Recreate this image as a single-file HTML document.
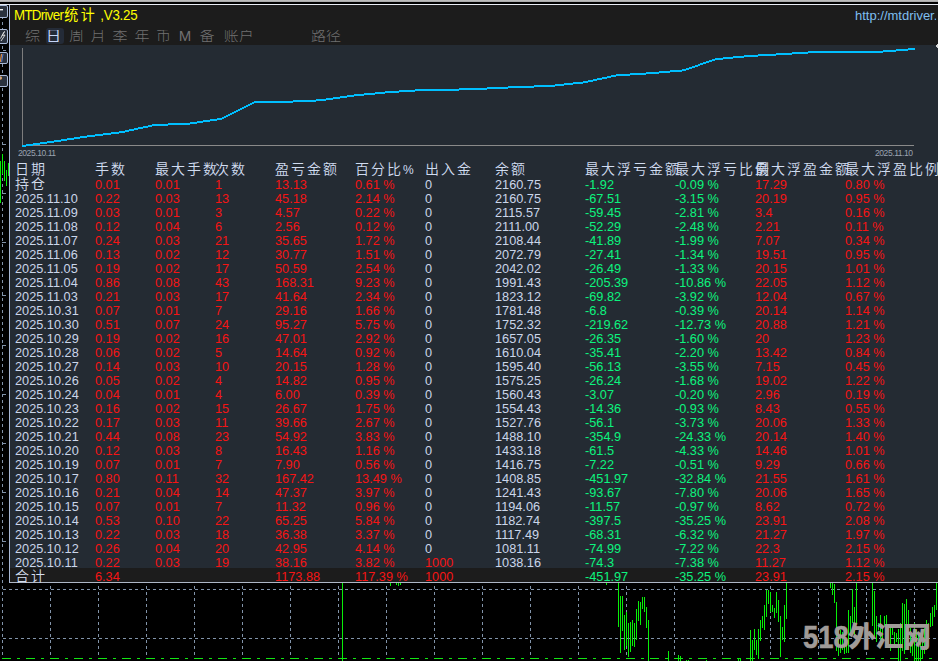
<!DOCTYPE html>
<html lang="zh-CN">
<head>
<meta charset="utf-8">
<title>MTDriver统计</title>
<style>
html,body{margin:0;padding:0;background:#000;}
body{width:938px;height:661px;position:relative;overflow:hidden;font-family:"Liberation Sans","Noto Sans CJK SC",sans-serif;}
#topbar{position:absolute;left:0;top:0;width:938px;height:2px;background:linear-gradient(#c4c4c4,#a2a2a2);}
#topline{position:absolute;left:0;top:4px;width:938px;height:1px;background:#e8ecf4;}
#bg{position:absolute;left:0;top:0;width:938px;height:661px;}
#panel{position:absolute;left:9px;top:5px;width:929px;height:578px;background:#242b33;border-left:1px solid #a9b9d6;box-sizing:border-box;overflow:hidden;}
#titlebg{position:absolute;left:0;top:0;width:929px;height:40px;background:#1c1c1c;}
#totbg{position:absolute;left:0;top:563px;width:929px;height:14px;background:#1c1c1c;}
#botline{position:absolute;left:0;top:577px;width:929px;height:1px;background:#aeb7c6;}
#abs{position:absolute;left:-10px;top:-5px;width:938px;height:661px;}
#title{position:absolute;left:14px;top:7px;font-size:13.33px;line-height:16px;color:#ffff00;white-space:nowrap;transform-origin:0 79%;transform:scaleY(1.07);}
#title span{display:inline-block;}
#title .t1{letter-spacing:-0.7px;}
#title .t2{font-size:14px;letter-spacing:2.5px;margin-left:1px;}
#title .t3{letter-spacing:-0.2px;white-space:pre;margin-left:-0.5px;}
#url{position:absolute;left:855px;top:8px;font-size:13.33px;line-height:16px;color:#7fbfef;white-space:nowrap;transform-origin:0 50%;transform:scaleX(0.975);width:83px;overflow:hidden;}
.tab{position:absolute;top:30px;width:40px;height:12px;overflow:hidden;text-align:center;font-size:15px;line-height:11px;color:#707070;font-weight:300;white-space:nowrap;}
.tab.on{color:#c6d6f6;font-weight:400;}
#tabon{position:absolute;left:46px;top:28px;width:18px;height:16px;border-radius:3px;background:#242b37;}
.dl{position:absolute;top:147px;font-size:9.5px;line-height:12px;color:#9aa3b1;white-space:nowrap;letter-spacing:-0.5px;transform-origin:0 50%;transform:scaleX(0.9);}
.h{position:absolute;top:160px;font-size:14px;letter-spacing:2px;line-height:18px;color:#d0dcf0;white-space:nowrap;font-weight:350;}
.row{position:absolute;left:0;width:938px;height:14px;font-size:13.33px;line-height:14px;white-space:nowrap;}
.row span{position:absolute;top:0;transform-origin:0 50%;transform:scaleX(0.955);}
.row .c{font-size:14px;letter-spacing:2px;font-weight:350;color:#d4deee;transform:none;top:-1.5px;}
.w{color:#cbd6ea;}
.h i{font-style:normal;font-size:12px;letter-spacing:0;}
.r{color:#f61414;}
.g{color:#0cf47e;}
#wm{position:absolute;left:0;top:0;color:#a09b98;white-space:nowrap;font-weight:bold;}
#wm .wd{position:absolute;left:803px;top:619px;font-size:30.5px;line-height:36px;transform-origin:0 50%;transform:scaleX(0.9);-webkit-text-stroke:0.5px #a09b98;}
#wm .wc{position:absolute;left:848px;top:619.5px;font-size:28px;line-height:36px;font-weight:900;letter-spacing:-0.5px;}
.btn{position:absolute;left:-2px;width:10px;height:13px;background:#2a313d;border:1px solid #a9b9d6;border-radius:2px;box-sizing:border-box;}
</style>
</head>
<body>
<svg id="bg" width="938" height="661" viewBox="0 0 938 661" shape-rendering="crispEdges">
<g stroke="#8193a9" stroke-width="1" stroke-dasharray="3 3" fill="none">
<g stroke-dashoffset="0"><line x1="2.5" y1="4" x2="2.5" y2="656"/><line x1="50.5" y1="4" x2="50.5" y2="656"/><line x1="98.5" y1="4" x2="98.5" y2="656"/><line x1="146.5" y1="4" x2="146.5" y2="656"/><line x1="194.5" y1="4" x2="194.5" y2="656"/><line x1="242.5" y1="4" x2="242.5" y2="656"/><line x1="290.5" y1="4" x2="290.5" y2="656"/><line x1="338.5" y1="4" x2="338.5" y2="656"/><line x1="386.5" y1="4" x2="386.5" y2="656"/><line x1="434.5" y1="4" x2="434.5" y2="656"/><line x1="482.5" y1="4" x2="482.5" y2="656"/><line x1="530.5" y1="4" x2="530.5" y2="656"/><line x1="578.5" y1="4" x2="578.5" y2="656"/><line x1="626.5" y1="4" x2="626.5" y2="656"/><line x1="674.5" y1="4" x2="674.5" y2="656"/><line x1="722.5" y1="4" x2="722.5" y2="656"/><line x1="770.5" y1="4" x2="770.5" y2="656"/><line x1="818.5" y1="4" x2="818.5" y2="656"/><line x1="866.5" y1="4" x2="866.5" y2="656"/><line x1="914.5" y1="4" x2="914.5" y2="656"/></g>
<line x1="3" y1="589.5" x2="938" y2="589.5"/><line x1="3" y1="638.5" x2="938" y2="638.5"/>
</g>
<g stroke="#12e612" stroke-width="1" stroke-dasharray="9 6 3 6" fill="none"><line x1="2" y1="658.5" x2="938" y2="658.5"/></g>
<g fill="#08ee08"><rect x="342" y="583" width="1" height="78"/><rect x="618" y="583" width="1" height="44"/><rect x="620" y="596" width="1" height="57"/><rect x="622" y="596" width="1" height="35"/><rect x="624" y="615" width="1" height="35"/><rect x="626" y="612" width="1" height="34"/><rect x="628" y="623" width="1" height="34"/><rect x="630" y="622" width="1" height="30"/><rect x="632" y="620" width="1" height="26"/><rect x="634" y="623" width="1" height="24"/><rect x="636" y="609" width="1" height="31"/><rect x="638" y="601" width="1" height="20"/><rect x="640" y="602" width="1" height="23"/><rect x="642" y="597" width="1" height="12"/><rect x="644" y="597" width="1" height="15"/><rect x="646" y="607" width="1" height="21"/><rect x="648" y="620" width="1" height="41"/><rect x="668" y="651" width="1" height="10"/><rect x="678" y="655" width="1" height="6"/><rect x="680" y="656" width="1" height="5"/><rect x="686" y="660" width="1" height="1"/><rect x="688" y="660" width="1" height="1"/><rect x="706" y="660" width="1" height="1"/><rect x="738" y="658" width="1" height="3"/><rect x="740" y="658" width="1" height="3"/><rect x="750" y="630" width="1" height="31"/><rect x="752" y="640" width="1" height="21"/><rect x="754" y="629" width="1" height="21"/><rect x="756" y="640" width="1" height="15"/><rect x="758" y="629" width="1" height="30"/><rect x="760" y="620" width="1" height="21"/><rect x="762" y="616" width="1" height="12"/><rect x="764" y="605" width="1" height="25"/><rect x="766" y="590" width="1" height="27"/><rect x="768" y="590" width="1" height="14"/><rect x="770" y="592" width="1" height="20"/><rect x="772" y="605" width="1" height="7"/><rect x="774" y="608" width="1" height="10"/><rect x="776" y="592" width="1" height="21"/><rect x="778" y="600" width="1" height="22"/><rect x="780" y="616" width="1" height="41"/><rect x="782" y="627" width="1" height="13"/><rect x="784" y="605" width="1" height="37"/><rect x="786" y="583" width="1" height="36"/><rect x="830" y="583" width="1" height="5"/><rect x="832" y="583" width="1" height="12"/><rect x="834" y="584" width="1" height="19"/><rect x="836" y="602" width="1" height="49"/><rect x="838" y="628" width="1" height="28"/><rect x="840" y="630" width="1" height="23"/><rect x="842" y="632" width="1" height="18"/><rect x="844" y="633" width="1" height="21"/><rect x="846" y="641" width="1" height="12"/><rect x="848" y="610" width="1" height="43"/><rect x="850" y="616" width="1" height="19"/><rect x="852" y="589" width="1" height="34"/><rect x="854" y="607" width="1" height="31"/><rect x="856" y="583" width="1" height="42"/><rect x="872" y="583" width="1" height="43"/><rect x="874" y="591" width="1" height="45"/><rect x="876" y="616" width="1" height="26"/><rect x="878" y="623" width="1" height="7"/><rect x="880" y="615" width="1" height="27"/><rect x="882" y="629" width="1" height="13"/><rect x="884" y="616" width="1" height="10"/><rect x="886" y="615" width="1" height="9"/><rect x="890" y="627" width="1" height="24"/><rect x="892" y="628" width="1" height="7"/><rect x="894" y="632" width="1" height="12"/><rect x="896" y="633" width="1" height="9"/><rect x="898" y="629" width="1" height="32"/><rect x="900" y="623" width="1" height="38"/><rect x="902" y="603" width="1" height="48"/><rect x="904" y="604" width="1" height="50"/><rect x="906" y="599" width="1" height="25"/><rect x="908" y="610" width="1" height="18"/><rect x="910" y="628" width="1" height="25"/><rect x="912" y="635" width="1" height="21"/><rect x="914" y="623" width="1" height="38"/><rect x="916" y="630" width="1" height="31"/><rect x="918" y="634" width="1" height="27"/><rect x="920" y="633" width="1" height="28"/><rect x="922" y="632" width="1" height="26"/><rect x="924" y="628" width="1" height="26"/><rect x="926" y="620" width="1" height="30"/><rect x="928" y="623" width="1" height="17"/><rect x="930" y="613" width="1" height="14"/><rect x="932" y="607" width="1" height="19"/><rect x="934" y="605" width="1" height="12"/><rect x="936" y="583" width="1" height="27"/><rect x="0" y="161" width="1" height="42"/><rect x="2" y="154" width="1" height="20"/><rect x="4" y="161" width="1" height="20"/><rect x="6" y="170" width="1" height="16"/><rect x="8" y="163" width="1" height="13"/><rect x="390" y="583" width="1" height="3"/><rect x="396" y="583" width="1" height="2"/><rect x="398" y="583" width="1" height="3"/><rect x="400" y="583" width="1" height="2"/><rect x="606" y="583" width="1" height="2"/></g>
<g fill="#8193a9"><rect x="3" y="50" width="3" height="1"/><rect x="2" y="144" width="4" height="1"/><rect x="2" y="193" width="4" height="1"/><rect x="2" y="242" width="4" height="1"/><rect x="2" y="295" width="4" height="1"/><rect x="2" y="345" width="4" height="1"/><rect x="2" y="394" width="4" height="1"/><rect x="2" y="443" width="4" height="1"/><rect x="2" y="492" width="4" height="1"/><rect x="2" y="541" width="4" height="1"/></g>
</svg>
<div id="topbar"></div>
<div id="topline"></div>
<div class="btn" style="top:5px"></div>
<div class="btn" style="top:29px;height:15px"></div>
<div class="btn" style="top:52px;height:12px"></div>
<div class="btn" style="top:75px;height:12px"></div>
<svg style="position:absolute;left:0;top:0" width="9" height="100" viewBox="0 0 9 100">
<rect x="0" y="9" width="3" height="1.4" fill="#f0f0f0"/>
<polyline points="0.5,38.5 4.5,31.5 2,35.5 5,35 1,41" fill="none" stroke="#d6d6d6" stroke-width="1"/>
<line x1="0.3" y1="62" x2="1.6" y2="54" stroke="#e08a3a" stroke-width="1.2"/><line x1="1.6" y1="62" x2="3" y2="54" stroke="#5a7fd0" stroke-width="1"/>
<circle cx="0.3" cy="78" r="1.8" fill="#e59a4a"/><circle cx="0.2" cy="78" r="0.8" fill="#8ab4f0"/>
</svg>
<div id="panel">
<div id="titlebg"></div>
<div id="totbg"></div>
<div id="botline"></div>
<div id="abs">
<div id="title"><span class="t1">MTDriver</span><span class="t2">统计</span><span class="t3"> ,V3.25</span></div>
<div id="url">http://mtdriver.</div>
<div id="tabon"></div>
<span class="tab" style="left:12.5px">综</span><span class="tab on" style="left:33.5px">日</span><span class="tab" style="left:56.5px">周</span><span class="tab" style="left:78px">月</span><span class="tab" style="left:100px">季</span><span class="tab" style="left:122px">年</span><span class="tab" style="left:143.5px">币</span><span class="tab" style="left:165px">M</span><span class="tab" style="left:187px">备</span><span class="tab" style="left:218.7px">账户</span><span class="tab" style="left:306px">路径</span>
<svg style="position:absolute;left:0;top:0" width="938" height="170" viewBox="0 0 938 170" shape-rendering="crispEdges">
<line x1="22.5" y1="48" x2="22.5" y2="146" stroke="#7d7d7d" stroke-width="1"/>
<line x1="22" y1="145.5" x2="914" y2="145.5" stroke="#8a8a8a" stroke-width="1"/>
<g fill="#00bfff"><rect x="22" y="145" width="4" height="2"/><rect x="26" y="144" width="7" height="2"/><rect x="33" y="143" width="7" height="2"/><rect x="40" y="142" width="7" height="2"/><rect x="47" y="141" width="7" height="2"/><rect x="54" y="140" width="7" height="2"/><rect x="61" y="139" width="6" height="2"/><rect x="67" y="138" width="7" height="2"/><rect x="74" y="137" width="6" height="2"/><rect x="80" y="136" width="7" height="2"/><rect x="87" y="135" width="8" height="2"/><rect x="95" y="134" width="8" height="2"/><rect x="103" y="133" width="8" height="2"/><rect x="111" y="132" width="8" height="2"/><rect x="119" y="131" width="6" height="2"/><rect x="125" y="130" width="4" height="2"/><rect x="129" y="129" width="5" height="2"/><rect x="134" y="128" width="4" height="2"/><rect x="138" y="127" width="5" height="2"/><rect x="143" y="126" width="5" height="2"/><rect x="148" y="125" width="4" height="2"/><rect x="152" y="124" width="16" height="2"/><rect x="168" y="123" width="22" height="2"/><rect x="190" y="122" width="7" height="2"/><rect x="197" y="121" width="6" height="2"/><rect x="203" y="120" width="7" height="2"/><rect x="210" y="119" width="7" height="2"/><rect x="217" y="118" width="5" height="2"/><rect x="222" y="117" width="2" height="2"/><rect x="224" y="116" width="2" height="2"/><rect x="226" y="115" width="2" height="2"/><rect x="228" y="114" width="2" height="2"/><rect x="230" y="113" width="2" height="2"/><rect x="232" y="112" width="2" height="2"/><rect x="234" y="111" width="2" height="2"/><rect x="236" y="110" width="2" height="2"/><rect x="238" y="109" width="2" height="2"/><rect x="240" y="108" width="2" height="2"/><rect x="242" y="107" width="2" height="2"/><rect x="244" y="106" width="2" height="2"/><rect x="246" y="105" width="2" height="2"/><rect x="248" y="104" width="2" height="2"/><rect x="250" y="103" width="2" height="2"/><rect x="252" y="102" width="2" height="2"/><rect x="254" y="101" width="39" height="2"/><rect x="293" y="100" width="23" height="2"/><rect x="316" y="99" width="10" height="2"/><rect x="326" y="98" width="7" height="2"/><rect x="333" y="97" width="7" height="2"/><rect x="340" y="96" width="7" height="2"/><rect x="347" y="95" width="7" height="2"/><rect x="354" y="94" width="10" height="2"/><rect x="364" y="93" width="11" height="2"/><rect x="375" y="92" width="10" height="2"/><rect x="385" y="91" width="14" height="2"/><rect x="399" y="90" width="16" height="2"/><rect x="415" y="89" width="44" height="2"/><rect x="459" y="88" width="28" height="2"/><rect x="487" y="87" width="21" height="2"/><rect x="508" y="86" width="26" height="2"/><rect x="534" y="85" width="21" height="2"/><rect x="555" y="84" width="9" height="2"/><rect x="564" y="83" width="9" height="2"/><rect x="573" y="82" width="10" height="2"/><rect x="583" y="81" width="5" height="2"/><rect x="588" y="80" width="5" height="2"/><rect x="593" y="79" width="4" height="2"/><rect x="597" y="78" width="5" height="2"/><rect x="602" y="77" width="5" height="2"/><rect x="607" y="76" width="4" height="2"/><rect x="611" y="75" width="5" height="2"/><rect x="616" y="74" width="14" height="2"/><rect x="630" y="73" width="16" height="2"/><rect x="646" y="72" width="13" height="2"/><rect x="659" y="71" width="11" height="2"/><rect x="670" y="70" width="12" height="2"/><rect x="682" y="69" width="4" height="2"/><rect x="686" y="68" width="3" height="2"/><rect x="689" y="67" width="3" height="2"/><rect x="692" y="66" width="3" height="2"/><rect x="695" y="65" width="3" height="2"/><rect x="698" y="64" width="2" height="2"/><rect x="700" y="63" width="3" height="2"/><rect x="703" y="62" width="3" height="2"/><rect x="706" y="61" width="3" height="2"/><rect x="709" y="60" width="3" height="2"/><rect x="712" y="59" width="3" height="2"/><rect x="715" y="58" width="8" height="2"/><rect x="723" y="57" width="10" height="2"/><rect x="733" y="56" width="11" height="2"/><rect x="744" y="55" width="14" height="2"/><rect x="758" y="54" width="18" height="2"/><rect x="776" y="53" width="16" height="2"/><rect x="792" y="52" width="16" height="2"/><rect x="808" y="51" width="75" height="2"/><rect x="883" y="50" width="13" height="2"/><rect x="896" y="49" width="12" height="2"/><rect x="908" y="48" width="7" height="2"/></g>
<polygon points="938,43 935.5,46 938,49" fill="#d8d8d8"/>
</svg>
<span class="dl" style="left:18px">2025.10.11</span>
<span class="dl" style="left:875px">2025.11.10</span>
<span class="h" style="left:15px">日期</span>
<span class="h" style="left:95px">手数</span>
<span class="h" style="left:155px">最大手数</span>
<span class="h" style="left:215px">次数</span>
<span class="h" style="left:275px">盈亏金额</span>
<span class="h" style="left:355px">百分比<i>%</i></span>
<span class="h" style="left:425px">出入金</span>
<span class="h" style="left:495px">余额</span>
<span class="h" style="left:585px">最大浮亏金额</span>
<span class="h" style="left:675px">最大浮亏比例</span>
<span class="h" style="left:755px">最大浮盈金额</span>
<span class="h" style="left:845px">最大浮盈比例</span>
<div class="row" style="top:178px"><span class="c" style="left:15px">持仓</span><span class="r" style="left:95px">0.01</span><span class="r" style="left:155px">0.01</span><span class="r" style="left:215px">1</span><span class="r" style="left:275px">13.13</span><span class="r" style="left:355px">0.61 %</span><span class="w" style="left:425px">0</span><span class="w" style="left:495px">2160.75</span><span class="g" style="left:585px">-1.92</span><span class="g" style="left:675px">-0.09 %</span><span class="r" style="left:755px">17.29</span><span class="r" style="left:845px">0.80 %</span></div>
<div class="row" style="top:192px"><span class="w" style="left:15px">2025.11.10</span><span class="r" style="left:95px">0.22</span><span class="r" style="left:155px">0.03</span><span class="r" style="left:215px">13</span><span class="r" style="left:275px">45.18</span><span class="r" style="left:355px">2.14 %</span><span class="w" style="left:425px">0</span><span class="w" style="left:495px">2160.75</span><span class="g" style="left:585px">-67.51</span><span class="g" style="left:675px">-3.15 %</span><span class="r" style="left:755px">20.19</span><span class="r" style="left:845px">0.95 %</span></div>
<div class="row" style="top:206px"><span class="w" style="left:15px">2025.11.09</span><span class="r" style="left:95px">0.03</span><span class="r" style="left:155px">0.01</span><span class="r" style="left:215px">3</span><span class="r" style="left:275px">4.57</span><span class="r" style="left:355px">0.22 %</span><span class="w" style="left:425px">0</span><span class="w" style="left:495px">2115.57</span><span class="g" style="left:585px">-59.45</span><span class="g" style="left:675px">-2.81 %</span><span class="r" style="left:755px">3.4</span><span class="r" style="left:845px">0.16 %</span></div>
<div class="row" style="top:220px"><span class="w" style="left:15px">2025.11.08</span><span class="r" style="left:95px">0.12</span><span class="r" style="left:155px">0.04</span><span class="r" style="left:215px">6</span><span class="r" style="left:275px">2.56</span><span class="r" style="left:355px">0.12 %</span><span class="w" style="left:425px">0</span><span class="w" style="left:495px">2111.00</span><span class="g" style="left:585px">-52.29</span><span class="g" style="left:675px">-2.48 %</span><span class="r" style="left:755px">2.21</span><span class="r" style="left:845px">0.11 %</span></div>
<div class="row" style="top:234px"><span class="w" style="left:15px">2025.11.07</span><span class="r" style="left:95px">0.24</span><span class="r" style="left:155px">0.03</span><span class="r" style="left:215px">21</span><span class="r" style="left:275px">35.65</span><span class="r" style="left:355px">1.72 %</span><span class="w" style="left:425px">0</span><span class="w" style="left:495px">2108.44</span><span class="g" style="left:585px">-41.89</span><span class="g" style="left:675px">-1.99 %</span><span class="r" style="left:755px">7.07</span><span class="r" style="left:845px">0.34 %</span></div>
<div class="row" style="top:248px"><span class="w" style="left:15px">2025.11.06</span><span class="r" style="left:95px">0.13</span><span class="r" style="left:155px">0.02</span><span class="r" style="left:215px">12</span><span class="r" style="left:275px">30.77</span><span class="r" style="left:355px">1.51 %</span><span class="w" style="left:425px">0</span><span class="w" style="left:495px">2072.79</span><span class="g" style="left:585px">-27.41</span><span class="g" style="left:675px">-1.34 %</span><span class="r" style="left:755px">19.51</span><span class="r" style="left:845px">0.95 %</span></div>
<div class="row" style="top:262px"><span class="w" style="left:15px">2025.11.05</span><span class="r" style="left:95px">0.19</span><span class="r" style="left:155px">0.02</span><span class="r" style="left:215px">17</span><span class="r" style="left:275px">50.59</span><span class="r" style="left:355px">2.54 %</span><span class="w" style="left:425px">0</span><span class="w" style="left:495px">2042.02</span><span class="g" style="left:585px">-26.49</span><span class="g" style="left:675px">-1.33 %</span><span class="r" style="left:755px">20.15</span><span class="r" style="left:845px">1.01 %</span></div>
<div class="row" style="top:276px"><span class="w" style="left:15px">2025.11.04</span><span class="r" style="left:95px">0.86</span><span class="r" style="left:155px">0.08</span><span class="r" style="left:215px">43</span><span class="r" style="left:275px">168.31</span><span class="r" style="left:355px">9.23 %</span><span class="w" style="left:425px">0</span><span class="w" style="left:495px">1991.43</span><span class="g" style="left:585px">-205.39</span><span class="g" style="left:675px">-10.86 %</span><span class="r" style="left:755px">22.05</span><span class="r" style="left:845px">1.12 %</span></div>
<div class="row" style="top:290px"><span class="w" style="left:15px">2025.11.03</span><span class="r" style="left:95px">0.21</span><span class="r" style="left:155px">0.03</span><span class="r" style="left:215px">17</span><span class="r" style="left:275px">41.64</span><span class="r" style="left:355px">2.34 %</span><span class="w" style="left:425px">0</span><span class="w" style="left:495px">1823.12</span><span class="g" style="left:585px">-69.82</span><span class="g" style="left:675px">-3.92 %</span><span class="r" style="left:755px">12.04</span><span class="r" style="left:845px">0.67 %</span></div>
<div class="row" style="top:304px"><span class="w" style="left:15px">2025.10.31</span><span class="r" style="left:95px">0.07</span><span class="r" style="left:155px">0.01</span><span class="r" style="left:215px">7</span><span class="r" style="left:275px">29.16</span><span class="r" style="left:355px">1.66 %</span><span class="w" style="left:425px">0</span><span class="w" style="left:495px">1781.48</span><span class="g" style="left:585px">-6.8</span><span class="g" style="left:675px">-0.39 %</span><span class="r" style="left:755px">20.14</span><span class="r" style="left:845px">1.14 %</span></div>
<div class="row" style="top:318px"><span class="w" style="left:15px">2025.10.30</span><span class="r" style="left:95px">0.51</span><span class="r" style="left:155px">0.07</span><span class="r" style="left:215px">24</span><span class="r" style="left:275px">95.27</span><span class="r" style="left:355px">5.75 %</span><span class="w" style="left:425px">0</span><span class="w" style="left:495px">1752.32</span><span class="g" style="left:585px">-219.62</span><span class="g" style="left:675px">-12.73 %</span><span class="r" style="left:755px">20.88</span><span class="r" style="left:845px">1.21 %</span></div>
<div class="row" style="top:332px"><span class="w" style="left:15px">2025.10.29</span><span class="r" style="left:95px">0.19</span><span class="r" style="left:155px">0.02</span><span class="r" style="left:215px">16</span><span class="r" style="left:275px">47.01</span><span class="r" style="left:355px">2.92 %</span><span class="w" style="left:425px">0</span><span class="w" style="left:495px">1657.05</span><span class="g" style="left:585px">-26.35</span><span class="g" style="left:675px">-1.60 %</span><span class="r" style="left:755px">20</span><span class="r" style="left:845px">1.23 %</span></div>
<div class="row" style="top:346px"><span class="w" style="left:15px">2025.10.28</span><span class="r" style="left:95px">0.06</span><span class="r" style="left:155px">0.02</span><span class="r" style="left:215px">5</span><span class="r" style="left:275px">14.64</span><span class="r" style="left:355px">0.92 %</span><span class="w" style="left:425px">0</span><span class="w" style="left:495px">1610.04</span><span class="g" style="left:585px">-35.41</span><span class="g" style="left:675px">-2.20 %</span><span class="r" style="left:755px">13.42</span><span class="r" style="left:845px">0.84 %</span></div>
<div class="row" style="top:360px"><span class="w" style="left:15px">2025.10.27</span><span class="r" style="left:95px">0.14</span><span class="r" style="left:155px">0.03</span><span class="r" style="left:215px">10</span><span class="r" style="left:275px">20.15</span><span class="r" style="left:355px">1.28 %</span><span class="w" style="left:425px">0</span><span class="w" style="left:495px">1595.40</span><span class="g" style="left:585px">-56.13</span><span class="g" style="left:675px">-3.55 %</span><span class="r" style="left:755px">7.15</span><span class="r" style="left:845px">0.45 %</span></div>
<div class="row" style="top:374px"><span class="w" style="left:15px">2025.10.26</span><span class="r" style="left:95px">0.05</span><span class="r" style="left:155px">0.02</span><span class="r" style="left:215px">4</span><span class="r" style="left:275px">14.82</span><span class="r" style="left:355px">0.95 %</span><span class="w" style="left:425px">0</span><span class="w" style="left:495px">1575.25</span><span class="g" style="left:585px">-26.24</span><span class="g" style="left:675px">-1.68 %</span><span class="r" style="left:755px">19.02</span><span class="r" style="left:845px">1.22 %</span></div>
<div class="row" style="top:388px"><span class="w" style="left:15px">2025.10.24</span><span class="r" style="left:95px">0.04</span><span class="r" style="left:155px">0.01</span><span class="r" style="left:215px">4</span><span class="r" style="left:275px">6.00</span><span class="r" style="left:355px">0.39 %</span><span class="w" style="left:425px">0</span><span class="w" style="left:495px">1560.43</span><span class="g" style="left:585px">-3.07</span><span class="g" style="left:675px">-0.20 %</span><span class="r" style="left:755px">2.96</span><span class="r" style="left:845px">0.19 %</span></div>
<div class="row" style="top:402px"><span class="w" style="left:15px">2025.10.23</span><span class="r" style="left:95px">0.16</span><span class="r" style="left:155px">0.02</span><span class="r" style="left:215px">15</span><span class="r" style="left:275px">26.67</span><span class="r" style="left:355px">1.75 %</span><span class="w" style="left:425px">0</span><span class="w" style="left:495px">1554.43</span><span class="g" style="left:585px">-14.36</span><span class="g" style="left:675px">-0.93 %</span><span class="r" style="left:755px">8.43</span><span class="r" style="left:845px">0.55 %</span></div>
<div class="row" style="top:416px"><span class="w" style="left:15px">2025.10.22</span><span class="r" style="left:95px">0.17</span><span class="r" style="left:155px">0.03</span><span class="r" style="left:215px">11</span><span class="r" style="left:275px">39.66</span><span class="r" style="left:355px">2.67 %</span><span class="w" style="left:425px">0</span><span class="w" style="left:495px">1527.76</span><span class="g" style="left:585px">-56.1</span><span class="g" style="left:675px">-3.73 %</span><span class="r" style="left:755px">20.06</span><span class="r" style="left:845px">1.33 %</span></div>
<div class="row" style="top:430px"><span class="w" style="left:15px">2025.10.21</span><span class="r" style="left:95px">0.44</span><span class="r" style="left:155px">0.08</span><span class="r" style="left:215px">23</span><span class="r" style="left:275px">54.92</span><span class="r" style="left:355px">3.83 %</span><span class="w" style="left:425px">0</span><span class="w" style="left:495px">1488.10</span><span class="g" style="left:585px">-354.9</span><span class="g" style="left:675px">-24.33 %</span><span class="r" style="left:755px">20.14</span><span class="r" style="left:845px">1.40 %</span></div>
<div class="row" style="top:444px"><span class="w" style="left:15px">2025.10.20</span><span class="r" style="left:95px">0.12</span><span class="r" style="left:155px">0.03</span><span class="r" style="left:215px">8</span><span class="r" style="left:275px">16.43</span><span class="r" style="left:355px">1.16 %</span><span class="w" style="left:425px">0</span><span class="w" style="left:495px">1433.18</span><span class="g" style="left:585px">-61.5</span><span class="g" style="left:675px">-4.33 %</span><span class="r" style="left:755px">14.46</span><span class="r" style="left:845px">1.01 %</span></div>
<div class="row" style="top:458px"><span class="w" style="left:15px">2025.10.19</span><span class="r" style="left:95px">0.07</span><span class="r" style="left:155px">0.01</span><span class="r" style="left:215px">7</span><span class="r" style="left:275px">7.90</span><span class="r" style="left:355px">0.56 %</span><span class="w" style="left:425px">0</span><span class="w" style="left:495px">1416.75</span><span class="g" style="left:585px">-7.22</span><span class="g" style="left:675px">-0.51 %</span><span class="r" style="left:755px">9.29</span><span class="r" style="left:845px">0.66 %</span></div>
<div class="row" style="top:472px"><span class="w" style="left:15px">2025.10.17</span><span class="r" style="left:95px">0.80</span><span class="r" style="left:155px">0.11</span><span class="r" style="left:215px">32</span><span class="r" style="left:275px">167.42</span><span class="r" style="left:355px">13.49 %</span><span class="w" style="left:425px">0</span><span class="w" style="left:495px">1408.85</span><span class="g" style="left:585px">-451.97</span><span class="g" style="left:675px">-32.84 %</span><span class="r" style="left:755px">21.55</span><span class="r" style="left:845px">1.61 %</span></div>
<div class="row" style="top:486px"><span class="w" style="left:15px">2025.10.16</span><span class="r" style="left:95px">0.21</span><span class="r" style="left:155px">0.04</span><span class="r" style="left:215px">14</span><span class="r" style="left:275px">47.37</span><span class="r" style="left:355px">3.97 %</span><span class="w" style="left:425px">0</span><span class="w" style="left:495px">1241.43</span><span class="g" style="left:585px">-93.67</span><span class="g" style="left:675px">-7.80 %</span><span class="r" style="left:755px">20.06</span><span class="r" style="left:845px">1.65 %</span></div>
<div class="row" style="top:500px"><span class="w" style="left:15px">2025.10.15</span><span class="r" style="left:95px">0.07</span><span class="r" style="left:155px">0.01</span><span class="r" style="left:215px">7</span><span class="r" style="left:275px">11.32</span><span class="r" style="left:355px">0.96 %</span><span class="w" style="left:425px">0</span><span class="w" style="left:495px">1194.06</span><span class="g" style="left:585px">-11.57</span><span class="g" style="left:675px">-0.97 %</span><span class="r" style="left:755px">8.62</span><span class="r" style="left:845px">0.72 %</span></div>
<div class="row" style="top:514px"><span class="w" style="left:15px">2025.10.14</span><span class="r" style="left:95px">0.53</span><span class="r" style="left:155px">0.10</span><span class="r" style="left:215px">22</span><span class="r" style="left:275px">65.25</span><span class="r" style="left:355px">5.84 %</span><span class="w" style="left:425px">0</span><span class="w" style="left:495px">1182.74</span><span class="g" style="left:585px">-397.5</span><span class="g" style="left:675px">-35.25 %</span><span class="r" style="left:755px">23.91</span><span class="r" style="left:845px">2.08 %</span></div>
<div class="row" style="top:528px"><span class="w" style="left:15px">2025.10.13</span><span class="r" style="left:95px">0.22</span><span class="r" style="left:155px">0.03</span><span class="r" style="left:215px">18</span><span class="r" style="left:275px">36.38</span><span class="r" style="left:355px">3.37 %</span><span class="w" style="left:425px">0</span><span class="w" style="left:495px">1117.49</span><span class="g" style="left:585px">-68.31</span><span class="g" style="left:675px">-6.32 %</span><span class="r" style="left:755px">21.27</span><span class="r" style="left:845px">1.97 %</span></div>
<div class="row" style="top:542px"><span class="w" style="left:15px">2025.10.12</span><span class="r" style="left:95px">0.26</span><span class="r" style="left:155px">0.04</span><span class="r" style="left:215px">20</span><span class="r" style="left:275px">42.95</span><span class="r" style="left:355px">4.14 %</span><span class="w" style="left:425px">0</span><span class="w" style="left:495px">1081.11</span><span class="g" style="left:585px">-74.99</span><span class="g" style="left:675px">-7.22 %</span><span class="r" style="left:755px">22.3</span><span class="r" style="left:845px">2.15 %</span></div>
<div class="row" style="top:556px"><span class="w" style="left:15px">2025.10.11</span><span class="r" style="left:95px">0.22</span><span class="r" style="left:155px">0.03</span><span class="r" style="left:215px">19</span><span class="r" style="left:275px">38.16</span><span class="r" style="left:355px">3.82 %</span><span class="r" style="left:425px">1000</span><span class="w" style="left:495px">1038.16</span><span class="g" style="left:585px">-74.3</span><span class="g" style="left:675px">-7.38 %</span><span class="r" style="left:755px">11.27</span><span class="r" style="left:845px">1.12 %</span></div>
<div class="row" style="top:570px"><span class="c" style="left:15px">合计</span><span class="r" style="left:95px">6.34</span><span class="r" style="left:275px">1173.88</span><span class="r" style="left:355px">117.39 %</span><span class="r" style="left:425px">1000</span><span class="g" style="left:585px">-451.97</span><span class="g" style="left:675px">-35.25 %</span><span class="r" style="left:755px">23.91</span><span class="r" style="left:845px">2.15 %</span></div>
</div>
</div>
<div id="wm"><span class="wd">518</span><span class="wc">外汇网</span></div>
</body>
</html>
